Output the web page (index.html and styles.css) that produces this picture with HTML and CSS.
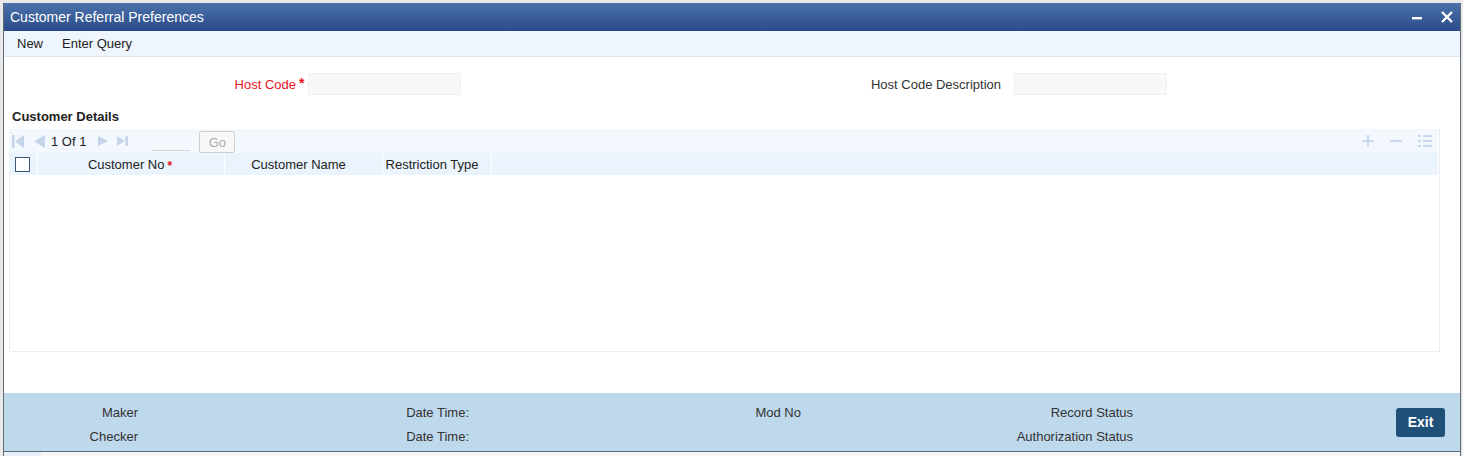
FILE: index.html
```html
<!DOCTYPE html>
<html>
<head>
<meta charset="utf-8">
<link rel="stylesheet" href="styles.css">
</head>
<body>
<div class="window">
  <div class="titlebar">
    <span class="title">Customer Referral Preferences</span>
    <span class="winbtns">
      <svg class="wb" width="12" height="12" viewBox="0 0 12 12"><rect x="1" y="6" width="10" height="2.4" fill="#fff"/></svg>
      <svg class="wb" width="14" height="14" viewBox="0 0 14 14"><path d="M2 2 L12 12 M12 2 L2 12" stroke="#fff" stroke-width="2.4"/></svg>
    </span>
  </div>
  <div class="toolbar">
    <span class="tool">New</span>
    <span class="tool">Enter Query</span>
  </div>
  <div class="main">
    <div class="hostrow">
      <label class="lbl lbl1 req">Host Code</label><span class="star">*</span>
      <div class="inp inp1"></div>
      <label class="lbl lbl2">Host Code Description</label>
      <div class="inp inp2"></div>
    </div>
    <div class="section">Customer Details</div>
    <div class="grid">
      <div class="pager">
        <svg class="pi pfirst" width="12" height="13" viewBox="0 0 12 13"><rect x="0" y="0" width="2.5" height="13" fill="#c5d4e8"/><path d="M12 0 L3 6.5 L12 13 Z" fill="#c5d4e8"/></svg>
        <svg class="pi pprev" width="12" height="13" viewBox="0 0 12 13"><path d="M12 0 L1 6.5 L12 13 Z" fill="#c5d4e8"/></svg>
        <span class="pagetext">1 Of 1</span>
        <svg class="pi pnext" width="10" height="12" viewBox="0 0 10 12"><path d="M0 1 L10 6 L0 11 Z" fill="#c5d4e8"/></svg>
        <svg class="pi plast" width="11" height="12" viewBox="0 0 11 12"><path d="M0 1 L8 6 L0 11 Z" fill="#c5d4e8"/><rect x="8.5" y="1" width="2.5" height="10" fill="#c5d4e8"/></svg>
        <div class="pageinp"></div>
        <button class="go">Go</button>
        <span class="gridtools">
          <svg width="12" height="12" viewBox="0 0 12 12"><path d="M6 0 V12 M0 6 H12" stroke="#c8d8ee" stroke-width="2"/></svg>
          <svg width="12" height="12" viewBox="0 0 12 12"><path d="M0 6 H12" stroke="#c8d8ee" stroke-width="2"/></svg>
          <svg width="14" height="12" viewBox="0 0 14 12"><g fill="#c8d8ee"><rect x="0" y="0" width="3" height="2"/><rect x="5" y="0" width="9" height="2"/><rect x="0" y="5" width="3" height="2"/><rect x="5" y="5" width="9" height="2"/><rect x="0" y="10" width="3" height="2"/><rect x="5" y="10" width="9" height="2"/></g></svg>
        </span>
      </div>
      <div class="headrow">
        <div class="hc hc0"><span class="chk"></span></div>
        <div class="hc hc1">Customer No <span class="rstar">*</span></div>
        <div class="hc hc2">Customer Name</div>
        <div class="hc hc3">Restriction Type</div>
        <div class="hc hcrest"></div>
      </div>
    </div>
  </div>
  <div class="footer">
    <div class="fgrid">
      <span class="fl">Maker</span>
      <span class="fl">Date Time:</span>
      <span class="fl">Mod No</span>
      <span class="fl">Record Status</span>
      <span class="fl">Checker</span>
      <span class="fl">Date Time:</span>
      <span class="fl"></span>
      <span class="fl">Authorization Status</span>
    </div>
    <button class="exit">Exit</button>
  </div>
  <div class="strip"><span class="tab"></span></div>
</div>
</body>
</html>
```
FILE: styles.css
```css
html, body {
  margin: 0;
  padding: 0;
}
body {
  background: #e9e9e9;
  font-family: "Liberation Sans", Arial, sans-serif;
  color: #333;
  font-size: 13px;
}
.window {
  margin: 3px 2px 0 3px;
  height: 453px;
  border-left: 1px solid #5b6b78;
  border-right: 1px solid #5b6b78;
  background: #fff;
  display: flex;
  flex-direction: column;
  overflow: hidden;
}
.titlebar {
  height: 28px;
  flex: none;
  background: linear-gradient(#4b72ab, #2a4b88);
  display: flex;
  align-items: center;
  justify-content: space-between;
  padding: 0 6px;
}
.title {
  color: #fff;
  font-size: 14px;
  margin-top: -1px;
}
.winbtns {
  display: flex;
  align-items: center;
  gap: 17px;
}
.wb { display: block; }
.toolbar {
  height: 25px;
  flex: none;
  background: #eef5fd;
  border-bottom: 1px solid #dfe4ea;
  display: flex;
  align-items: center;
  padding-left: 13px;
  gap: 19px;
}
.tool {
  font-size: 13px;
  color: #222;
}
.main {
  flex: none;
  height: 336px;
  padding-left: 5px;
}
.hostrow {
  display: flex;
  align-items: center;
  margin-top: 16px;
  height: 22px;
}
.lbl {
  text-align: right;
  font-size: 13px;
  color: #333;
}
.lbl1 { width: 287px; }
.req { color: #e8121c; }
.star {
  color: #e8121c;
  font-size: 14px;
  font-weight: bold;
  margin-left: 3px;
  width: 6px;
  align-self: flex-start;
  margin-top: 2px;
}
.inp {
  height: 20px;
  background: #f8f8f8;
  border: 1px solid #f1f1f1;
}
.inp1 { margin-left: 3px; width: 151px; }
.lbl2 { width: 300px; margin-left: 240px; }
.inp2 { margin-left: 13px; width: 151px; }
.section {
  font-weight: bold;
  font-size: 13px;
  color: #222;
  margin: 14px 0 0 3px;
  height: 20px;
  line-height: 16px;
}
.grid {
  width: 1431px;
  height: 223px;
  box-sizing: border-box;
  border: 1px solid #ebedf3;
}
.pager {
  margin: -1px 1px 0 -1px;
  height: 24px;
  background: #f3f8fe;
  display: flex;
  align-items: center;
}
.pi { display: block; flex: none; }
.pfirst { margin-left: 3px; }
.pprev { margin-left: 9px; }
.pagetext { margin-left: 6px; font-size: 13px; color: #222; }
.pnext { margin-left: 12px; }
.plast { margin-left: 9px; }
.pageinp {
  margin-left: 23px;
  width: 39px;
  height: 21px;
  border-bottom: 1px solid #d8d8d8;
  align-self: flex-start;
}
.go {
  margin-left: 9px;
  width: 36px;
  height: 22px;
  align-self: flex-end;
  border: 1px solid #cfcfcf;
  border-radius: 2px;
  background: #f8f8f8;
  color: #aaa;
  font-family: "Liberation Sans", Arial, sans-serif;
  font-size: 13px;
  padding: 0;
}
.gridtools {
  margin-left: auto;
  margin-right: 6px;
  display: flex;
  align-items: center;
  gap: 16px;
}
.gridtools svg { display: block; }
.headrow {
  margin: 0 1px 0 -1px;
  height: 22px;
  background: #ebf3fd;
  display: flex;
}
.hc {
  display: flex;
  align-items: center;
  justify-content: center;
  font-size: 13px;
  color: #222;
  border-right: 1px solid #fff;
  box-sizing: border-box;
}
.hc0 { width: 29px; justify-content: flex-start; padding-left: 6px; }
.chk {
  width: 15px;
  height: 15px;
  box-sizing: border-box;
  border: 1px solid #38587a;
  background: #fff;
}
.hc1 { width: 187px; padding-right: 2px; }
.rstar { color: #e8121c; margin-left: 3px; font-size: 12px; font-weight: bold; margin-top: 3px; }
.hc2 { width: 158px; padding-right: 10px; }
.hc3 { width: 109px; padding-right: 10px; }
.hcrest { flex: 1; border-right: none; }
.footer {
  height: 58px;
  flex: none;
  background: #bed8ec;
  border-bottom: 1px solid #586c7c;
  display: flex;
  align-items: center;
}
.fgrid {
  display: grid;
  grid-template-columns: 134px 331px 332px 332px;
  grid-auto-rows: 24px;
  align-self: flex-start;
  padding-top: 8px;
}
.fl {
  text-align: right;
  font-size: 13px;
  line-height: 24px;
  color: #333;
}
.exit {
  margin-left: auto;
  margin-right: 15px;
  width: 49px;
  height: 29px;
  background: #1f5078;
  color: #fff;
  font-family: "Liberation Sans", Arial, sans-serif;
  font-weight: bold;
  font-size: 14px;
  border: none;
  border-radius: 3px;
  padding: 0;
}
.strip {
  flex: 1;
  background: #f9f7f5;
  display: flex;
}
.tab {
  margin-left: 1px;
  width: 36px;
  background: #e6eef7;
}
```
